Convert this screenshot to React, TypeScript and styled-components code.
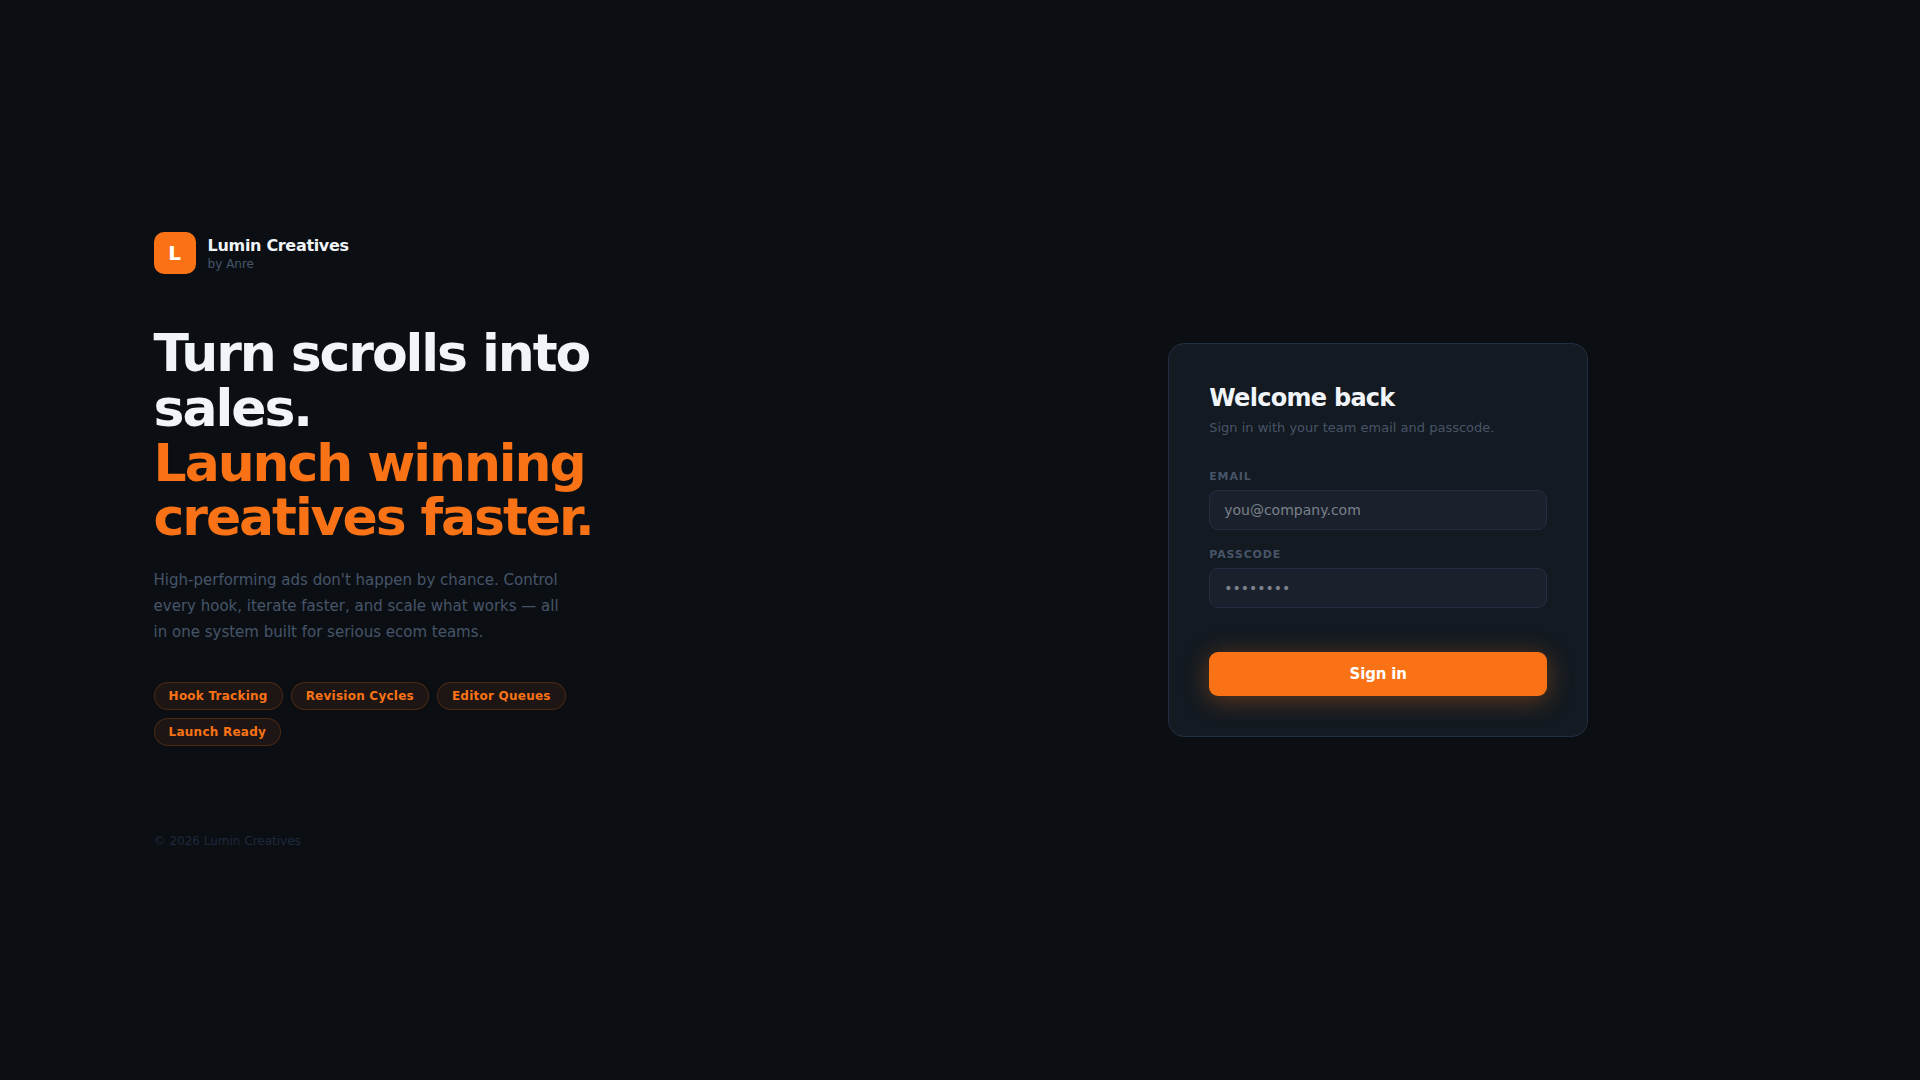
import React from "react";
import styled, { createGlobalStyle } from "styled-components";

const GlobalStyle = createGlobalStyle`
  *, *::before, *::after {
    box-sizing: border-box;
  }
  body {
    margin: 0;
    background: #0b0f14;
    color: #f1f5f9;
    font-family: "DejaVu Sans", sans-serif;
  }
  h1, h2, p, ul {
    margin: 0;
    padding: 0;
  }
`;

const Page = styled.main`
  min-height: 100vh;
  display: grid;
  grid-template-columns: 1fr 1fr;
  align-items: center;
  gap: 60px;
  padding: 40px 8%;
`;

const Intro = styled.section`
  max-width: 480px;
`;

const Brand = styled.div`
  display: flex;
  align-items: center;
  gap: 12px;
  margin-bottom: 52px;
`;

const BrandMark = styled.div`
  display: flex;
  align-items: center;
  justify-content: center;
  width: 42px;
  height: 42px;
  border-radius: 10px;
  background: #f97316;
  color: #fff;
  font-size: 20px;
  font-weight: 800;
`;

const BrandName = styled.div`
  margin-bottom: 2px;
  font-size: 16px;
  font-weight: 700;
  letter-spacing: -0.02em;
`;

const BrandOwner = styled.div`
  color: #475569;
  font-size: 12px;
`;

const Headline = styled.h1`
  margin-bottom: 22px;
  font-size: 52px;
  font-weight: 800;
  line-height: 1.05;
  letter-spacing: -0.04em;
`;

const Accent = styled.span`
  display: block;
  color: #f97316;
`;

const Lead = styled.p`
  max-width: 420px;
  margin-bottom: 36px;
  color: #475569;
  font-size: 15px;
  line-height: 1.75;
`;

const Tags = styled.ul`
  display: flex;
  flex-wrap: wrap;
  gap: 8px;
  list-style: none;
`;

const Tag = styled.li`
  padding: 6px 14px;
  border: 1px solid rgba(249, 115, 22, 0.2);
  border-radius: 20px;
  background: rgba(249, 115, 22, 0.08);
  color: #f97316;
  font-size: 12px;
  font-weight: 600;
  letter-spacing: 0.02em;
`;

const Copyright = styled.p`
  && {
    margin-top: 88px;
  }
  color: #1e293b;
  font-size: 12px;
`;

const Card = styled.form`
  justify-self: center;
  width: 100%;
  max-width: 420px;
  padding: 40px;
  border: 1px solid #222f42;
  border-radius: 16px;
  background: #131a21;
`;

const CardTitle = styled.h2`
  margin-bottom: 8px;
  font-size: 24px;
  font-weight: 800;
  letter-spacing: -0.03em;
`;

const CardHint = styled.p`
  && {
    margin-bottom: 35px;
  }
  color: #475569;
  font-size: 13px;
`;

const Field = styled.div`
  display: flex;
  flex-direction: column;
  gap: 7px;
  margin-bottom: 18px;
`;

const Label = styled.label`
  color: #475569;
  font-size: 11px;
  font-weight: 700;
  letter-spacing: 0.08em;
  text-transform: uppercase;
`;

const Input = styled.input`
  width: 100%;
  height: 40px;
  padding: 0 14px;
  border: 1px solid #222f42;
  border-radius: 9px;
  outline: none;
  background: #1a212c;
  color: #f1f5f9;
  font-family: inherit;
  font-size: 14px;

  &::placeholder {
    color: #7b808a;
  }

  &:focus {
    border-color: #f97316;
  }
`;

const Submit = styled.button`
  width: 100%;
  height: 44px;
  margin-top: 26px;
  border: 0;
  border-radius: 9px;
  background: #f97316;
  box-shadow: 0 4px 24px rgba(249, 115, 22, 0.35);
  color: #fff;
  font-family: inherit;
  font-size: 15px;
  font-weight: 700;
  letter-spacing: -0.01em;
  cursor: pointer;
`;

const tags = ["Hook Tracking", "Revision Cycles", "Editor Queues", "Launch Ready"];

export default function App() {
  return (
    <>
      <GlobalStyle />
      <Page>
        <Intro>
          <Brand>
            <BrandMark>L</BrandMark>
            <div>
              <BrandName>Lumin Creatives</BrandName>
              <BrandOwner>by Anre</BrandOwner>
            </div>
          </Brand>
          <Headline>
            Turn scrolls into sales.
            <Accent>Launch winning creatives faster.</Accent>
          </Headline>
          <Lead>
            High-performing ads don't happen by chance. Control every hook, iterate faster, and
            scale what works — all in one system built for serious ecom teams.
          </Lead>
          <Tags>
            {tags.map((tag) => (
              <Tag key={tag}>{tag}</Tag>
            ))}
          </Tags>
          <Copyright>© 2026 Lumin Creatives</Copyright>
        </Intro>
        <Card onSubmit={(event: React.FormEvent) => event.preventDefault()}>
          <CardTitle>Welcome back</CardTitle>
          <CardHint>Sign in with your team email and passcode.</CardHint>
          <Field>
            <Label htmlFor="email">Email</Label>
            <Input id="email" type="email" placeholder="you@company.com" />
          </Field>
          <Field>
            <Label htmlFor="passcode">Passcode</Label>
            <Input id="passcode" type="password" placeholder="••••••••" />
          </Field>
          <Submit type="submit">Sign in</Submit>
        </Card>
      </Page>
    </>
  );
}
